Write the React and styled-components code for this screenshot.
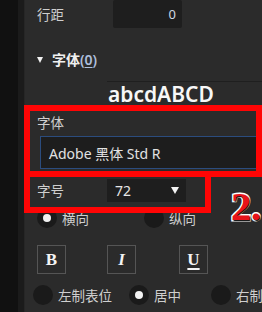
import React from "react";
import styled, { createGlobalStyle } from "styled-components";

const Global = createGlobalStyle`
  html, body { margin: 0; padding: 0; background: #111; }
  body { width: 262px; height: 312px; overflow: hidden; font-family: "Noto Sans", "Noto Sans CJK SC", sans-serif; }
`;

const Screen = styled.div`
  position: relative;
  display: flex;
  width: 262px;
  height: 312px;
  overflow: hidden;
`;

const Gutter = styled.div`
  width: ${(p) => p.$w}px;
  flex: none;
  background: ${(p) => p.$bg};
`;

const Panel = styled.div`
  flex: 1;
  min-width: 0;
  background: #2b2b2b;
  border-left: 1px solid #262626;
  padding-left: 12px;
  display: flex;
  flex-direction: column;
  overflow: hidden;
`;

const Label = styled.span`
  font-family: "Noto Sans CJK SC", sans-serif;
  font-size: 13.5px;
  line-height: 20px;
  color: #cfcfcf;
`;

const FieldRow = styled.div`
  display: grid;
  grid-template-columns: ${(p) => p.$labelW}px auto;
  align-items: center;
  height: ${(p) => p.$h}px;
  margin-top: ${(p) => p.$mt || 0}px;
`;

const NumberBox = styled.div`
  width: 69px;
  height: 28px;
  box-sizing: border-box;
  background: #1e1e1e;
  border-radius: 2px;
  display: flex;
  align-items: center;
  justify-content: flex-end;
  padding-right: 6px;
  font-size: 13px;
  color: #cfd8e2;
`;

const SectionHeader = styled.div`
  display: flex;
  align-items: center;
  height: 24px;
  margin-top: 19px;
  gap: 9px;
`;

const Caret = styled.span`
  width: 0;
  height: 0;
  border-left: 3.5px solid transparent;
  border-right: 3.5px solid transparent;
  border-top: 6px solid #f2f2f2;
  margin-top: 1px;
`;

const HeaderTitle = styled.span`
  font-family: "Noto Sans CJK SC", sans-serif;
  font-weight: 700;
  font-size: 14px;
  color: #f0f0f0;
`;

const Mnemonic = styled.span`
  font-family: "Noto Sans", sans-serif;
  font-weight: 600;
  color: #aebfdc;
  u { text-decoration-thickness: 1px; text-underline-offset: 2px; }
`;

const Preview = styled.div`
  margin-top: 10px;
  margin-left: 70px;
  border-top: 1px solid #1f1f1f;
  height: 24px;
  font-family: "Noto Sans", sans-serif;
  font-weight: 600;
  font-size: 21px;
  line-height: 24px;
  color: #f7f7f7;
  padding-left: 1px;
  white-space: nowrap;
`;

const BlockLabel = styled(Label)`
  display: block;
  margin-top: 6px;
`;

const FontSelect = styled.div`
  margin-top: 4px;
  margin-left: 3px;
  width: 240px;
  height: 33px;
  box-sizing: border-box;
  background: #1d1d1d;
  border: 1px solid #2b4c7e;
  display: flex;
  align-items: center;
  padding-left: 8px;
  font-size: 14px;
  color: #e2e2e2;
  white-space: nowrap;
  font-family: "Noto Sans", "Noto Sans CJK SC", sans-serif;
`;

const SizeBox = styled.div`
  width: 79px;
  height: 23px;
  box-sizing: border-box;
  background: #1e1e1e;
  display: flex;
  align-items: center;
  justify-content: space-between;
  padding: 0 7px 0 8px;
  font-size: 14px;
  color: #e6e6e6;
`;

const SmallCaret = styled.span`
  width: 0;
  height: 0;
  border-left: 4px solid transparent;
  border-right: 4px solid transparent;
  border-top: 7px solid #f4f4f4;
`;

const OptionRow = styled.div`
  display: grid;
  grid-template-columns: ${(p) => p.$cols};
  align-items: center;
  height: ${(p) => p.$h}px;
  margin-top: ${(p) => p.$mt}px;
  margin-left: ${(p) => p.$ml || 0}px;
`;

const Radio = styled.label`
  display: flex;
  align-items: center;
  gap: 5px;
  white-space: nowrap;
`;

const Dot = styled.span`
  width: 20px;
  height: 20px;
  border-radius: 50%;
  background: #1a1a1a;
  flex: none;
  display: flex;
  align-items: center;
  justify-content: center;
  &::after {
    content: "";
    width: 8px;
    height: 8px;
    border-radius: 50%;
    background: ${(p) => (p.$on ? "#f2f2f2" : "transparent")};
  }
`;

const StyleButton = styled.div`
  width: 29px;
  height: 29px;
  box-sizing: border-box;
  border: 1px solid #555;
  display: flex;
  align-items: center;
  justify-content: center;
  font-family: "Liberation Serif", serif;
  font-weight: 700;
  font-size: 17px;
  color: #f4f4f4;
  font-style: ${(p) => (p.$italic ? "italic" : "normal")};
  text-decoration: ${(p) => (p.$underline ? "underline" : "none")};
  text-decoration-thickness: 2px;
  text-underline-offset: 3px;
`;

const Callout = styled.div`
  position: absolute;
  left: ${(p) => p.$x}px;
  top: ${(p) => p.$y}px;
  width: ${(p) => p.$w}px;
  height: ${(p) => p.$h}px;
  box-sizing: border-box;
  border: 6px solid #ff0505;
  pointer-events: none;
`;

const StepMark = styled.div`
  position: absolute;
  left: 231px;
  top: 187px;
  font-family: "Liberation Serif", serif;
  font-weight: 700;
  font-size: 40px;
  line-height: 40px;
  color: #e8131a;
  -webkit-text-stroke: 3px #ffffff;
  paint-order: stroke fill;
  text-shadow: 1px 1px 1px #000;
  white-space: nowrap;
`;

export default function App() {
  return (
    <>
      <Global />
      <Screen>
        <Gutter $w={18} $bg="#111111" />
        <Gutter $w={6} $bg="#1b1b1b" />
        <Panel>
          <FieldRow $labelW={76} $h={28}>
            <Label>行距</Label>
            <NumberBox>0</NumberBox>
          </FieldRow>

          <SectionHeader>
            <Caret />
            <HeaderTitle>
              字体<Mnemonic>(<u>0</u>)</Mnemonic>
            </HeaderTitle>
          </SectionHeader>

          <Preview>abcdABCD</Preview>

          <BlockLabel>字体</BlockLabel>
          <FontSelect>Adobe 黑体 Std R</FontSelect>

          <FieldRow $labelW={70} $h={26} $mt={8}>
            <Label>字号</Label>
            <SizeBox>
              72
              <SmallCaret />
            </SizeBox>
          </FieldRow>

          <OptionRow $cols="107px auto" $h={20} $mt={5}>
            <Radio>
              <Dot $on />
              <Label>横向</Label>
            </Radio>
            <Radio>
              <Dot />
              <Label>纵向</Label>
            </Radio>
          </OptionRow>

          <OptionRow $cols="70px 72px auto" $h={29} $mt={17}>
            <StyleButton>B</StyleButton>
            <StyleButton $italic>I</StyleButton>
            <StyleButton $underline>U</StyleButton>
          </OptionRow>

          <OptionRow $cols="96px 82px auto" $h={20} $mt={11} $ml={-4}>
            <Radio>
              <Dot />
              <Label>左制表位</Label>
            </Radio>
            <Radio>
              <Dot $on />
              <Label>居中</Label>
            </Radio>
            <Radio>
              <Dot />
              <Label>右制表位</Label>
            </Radio>
          </OptionRow>
        </Panel>

        <Callout $x={24} $y={105} $w={238} $h={72} />
        <Callout $x={24} $y={171} $w={187} $h={42} />
        <StepMark>2.</StepMark>
      </Screen>
    </>
  );
}
